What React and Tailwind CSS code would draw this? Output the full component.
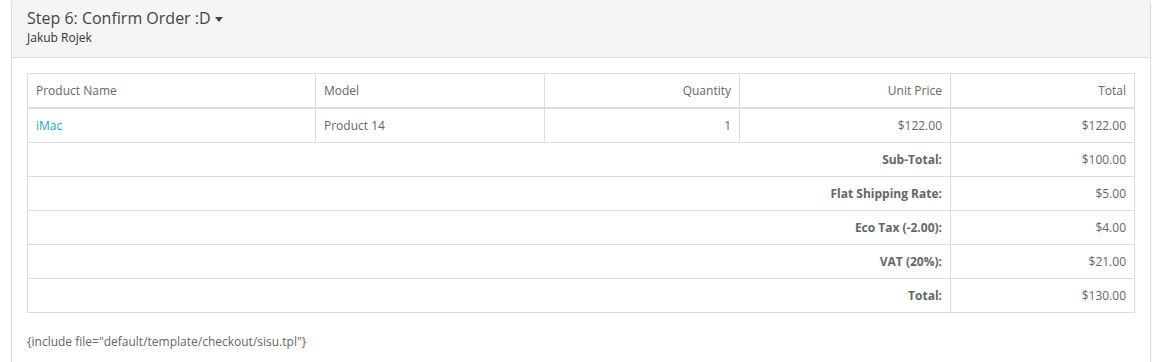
import React from "react";

const rows = [
  { label: "Sub-Total:", value: "$100.00" },
  { label: "Flat Shipping Rate:", value: "$5.00" },
  { label: "Eco Tax (-2.00):", value: "$4.00" },
  { label: "VAT (20%):", value: "$21.00" },
  { label: "Total:", value: "$130.00" },
];

export default function App() {
  return (
    <div className="bg-white w-[1166px] h-[362px] overflow-hidden" style={{ fontFamily: '"Open Sans", sans-serif' }}>
      <div className="ml-[11px] mt-[-1px] w-[1140px] border border-[#dddddd] rounded-t-[4px]">
        <div className="bg-[#f5f5f5] border-b border-[#dddddd] px-[15px] pt-[10px] pb-[11px] rounded-t-[4px]">
          <div className="text-[16px] leading-[17.6px] text-[#444444] flex items-center">
            <span>Step 6: Confirm Order :D</span>
            <span className="ml-[4px] mt-[1px] inline-block w-0 h-0 border-l-[4px] border-r-[4px] border-t-[5px] border-l-transparent border-r-transparent border-t-[#444444]"></span>
          </div>
          <div className="text-[12px] leading-[17px] text-[#333333] mt-[1px]">Jakub Rojek</div>
        </div>
        <div className="p-[15px] pb-[30px] text-[12px] leading-[17px] text-[#666666]">
          <table className="w-full table-fixed border-collapse border border-[#dddddd]">
            <colgroup>
              <col className="w-[288px]" />
              <col className="w-[229px]" />
              <col className="w-[195px]" />
              <col className="w-[211px]" />
              <col />
            </colgroup>
            <thead>
              <tr>
                <td className="border border-[#dddddd] border-b-2 p-[8px] text-left">Product Name</td>
                <td className="border border-[#dddddd] border-b-2 p-[8px] text-left">Model</td>
                <td className="border border-[#dddddd] border-b-2 p-[8px] text-right">Quantity</td>
                <td className="border border-[#dddddd] border-b-2 p-[8px] text-right">Unit Price</td>
                <td className="border border-[#dddddd] border-b-2 p-[8px] text-right">Total</td>
              </tr>
            </thead>
            <tbody>
              <tr>
                <td className="border border-[#dddddd] p-[8px] text-left">
                  <a className="text-[#23a1d1]">iMac</a>
                </td>
                <td className="border border-[#dddddd] p-[8px] text-left">Product 14</td>
                <td className="border border-[#dddddd] p-[8px] text-right">1</td>
                <td className="border border-[#dddddd] p-[8px] text-right">$122.00</td>
                <td className="border border-[#dddddd] p-[8px] text-right">$122.00</td>
              </tr>
              {rows.map((r) => (
                <tr key={r.label}>
                  <td colSpan={4} className="border border-[#dddddd] p-[8px] text-right font-bold">{r.label}</td>
                  <td className="border border-[#dddddd] p-[8px] text-right">{r.value}</td>
                </tr>
              ))}
            </tbody>
          </table>
          <p className="mt-[20px]">{'{include file="default/template/checkout/sisu.tpl"}'}</p>
        </div>
      </div>
    </div>
  );
}
